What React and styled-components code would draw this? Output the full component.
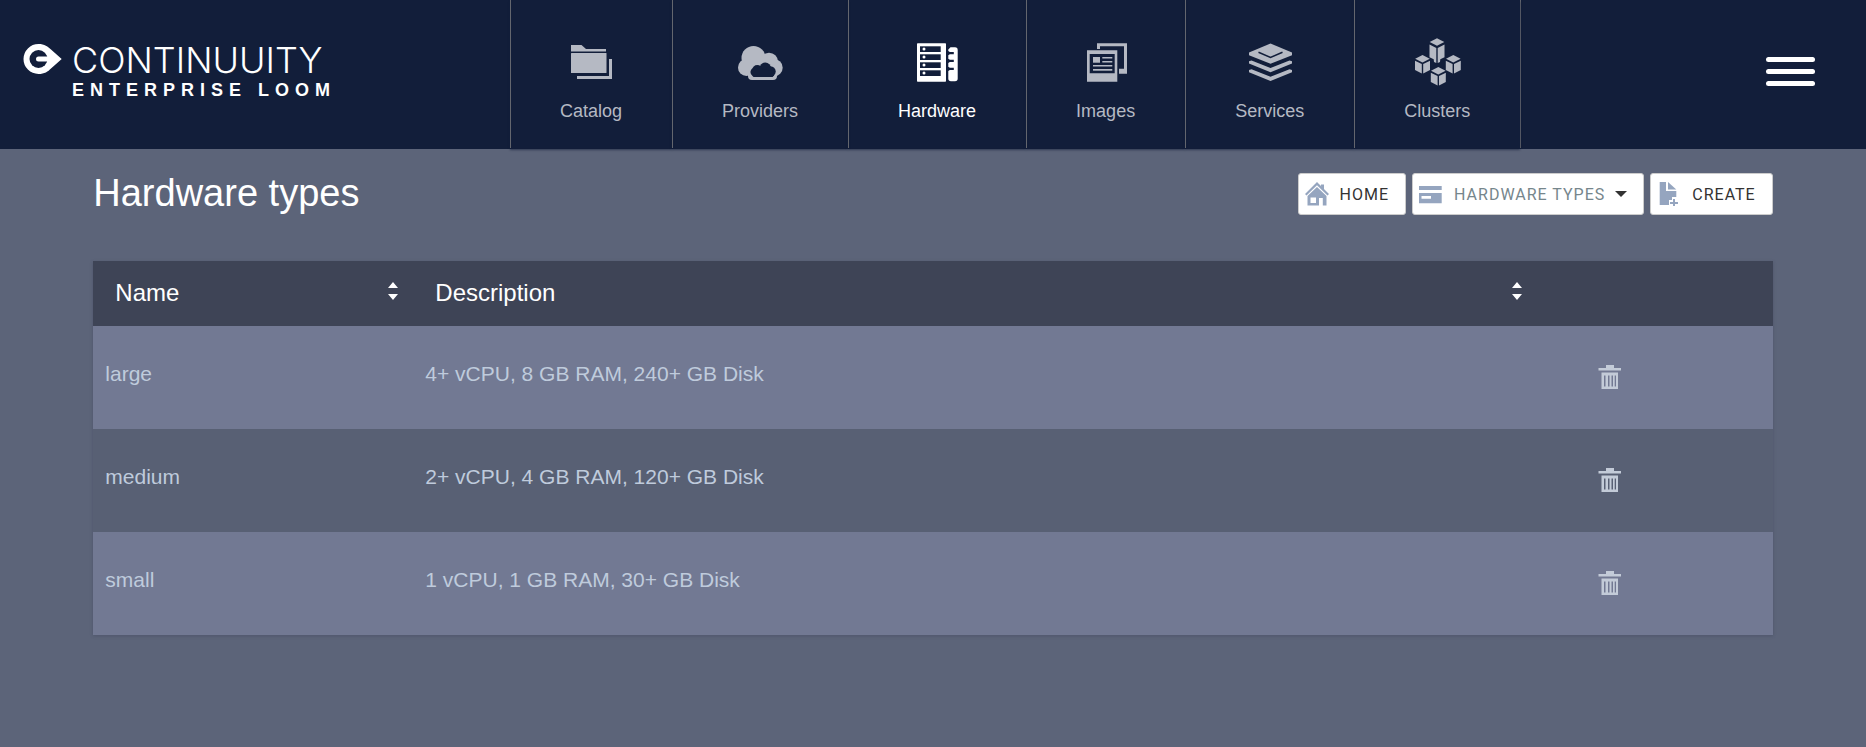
import React from "react";
import styled, { createGlobalStyle } from "styled-components";

const GlobalStyle = createGlobalStyle`
  * { box-sizing: border-box; }
  body {
    margin: 0;
    min-height: 100vh;
    background: #5c6479;
    color: #fff;
    font-family: "Liberation Sans", Arial, sans-serif;
  }
  button { font: inherit; cursor: pointer; }
`;

const Header = styled.header`
  display: grid;
  grid-template-columns: minmax(350px, 510px) auto 1fr;
  align-items: start;
  background: #121e3a;
  padding-bottom: 1px;
`;

const Brand = styled.a`
  display: flex;
  gap: 10px;
  padding: 40px 0 0 22px;
  color: #fff;
  text-decoration: none;
`;

const BrandMark = styled.svg`
  width: 40px;
  height: 32px;
  margin-top: 3px;
`;

const BrandText = styled.span`
  display: flex;
  flex-direction: column;
`;

const BrandName = styled.span`
  font-family: Inter, "DejaVu Sans", sans-serif;
  font-weight: 300;
  font-size: 36px;
  line-height: 40px;
`;

const BrandProduct = styled.span`
  font-size: 18px;
  font-weight: 700;
  line-height: 20px;
  letter-spacing: 6px;
`;

const Nav = styled.nav`
  display: flex;
  border-right: 1px solid #63666e;
`;

const NavItem = styled.a`
  display: flex;
  flex-direction: column;
  align-items: center;
  gap: 13px;
  padding: 38px 50px 25px 49px;
  border-left: 1px solid #63666e;
  box-shadow: 0 2px 2px rgba(18, 30, 58, 0.6);
  color: ${(p) => (p.$active ? "#fff" : "#b5b9c3")};
  font-size: 18px;
  line-height: 24px;
  text-decoration: none;
`;

const NavIcon = styled.svg`
  width: 48px;
  height: 48px;
  fill: currentColor;
`;

const MenuButton = styled.button`
  display: flex;
  flex-direction: column;
  gap: 7px;
  justify-self: end;
  margin: 57px 51px 0 0;
  padding: 0;
  border: 0;
  background: none;
`;

const MenuBar = styled.span`
  width: 49px;
  height: 5px;
  border-radius: 3px;
  background: #fff;
`;

const Main = styled.main`
  padding: 24px 5% 0;
`;

const TitleRow = styled.div`
  display: flex;
  justify-content: space-between;
  align-items: flex-start;
  margin-bottom: 46px;
`;

const Title = styled.h1`
  margin: 0;
  font-size: 38px;
  font-weight: 400;
  line-height: 40px;
`;

const Toolbar = styled.div`
  display: flex;
  gap: 6px;
`;

const ToolButton = styled.button`
  display: flex;
  align-items: center;
  height: 42px;
  padding: 0 16px 0 6px;
  border: 1px solid #ccc;
  border-radius: 3px;
  background: #fff;
  color: ${(p) => (p.$muted ? "#76868c" : "#333")};
  font-family: Roboto, sans-serif;
  font-size: 16px;
  letter-spacing: 1px;
  white-space: nowrap;
`;

const ToolIcon = styled.svg`
  width: 24px;
  height: 24px;
  margin-right: 11px;
  fill: #95a5bf;
`;

const Caret = styled.span`
  margin-left: 10px;
  border: 6px solid transparent;
  border-top-color: #333;
  border-bottom: 0;
`;

const Table = styled.table`
  width: 100%;
  table-layout: fixed;
  border-collapse: collapse;
  box-shadow: 0 1px 3px rgba(60, 66, 90, 0.4);
`;

const Col = styled.col`
  width: ${(p) => p.$width};
`;

const HeadRow = styled.tr`
  height: 65px;
  background: #3e4456;
`;

const HeadCell = styled.th`
  padding: 0 0 2px;
`;

const SortButton = styled.button`
  display: flex;
  align-items: center;
  justify-content: space-between;
  width: 100%;
  padding: 0 15px 0 22px;
  border: 0;
  background: none;
  color: #fff;
  font-size: 24px;
  font-weight: 400;
  line-height: 28px;
`;

const SortIcon = styled.svg`
  width: 10px;
  height: 18px;
  margin-bottom: 4px;
  fill: #fff;
`;

const Row = styled.tr`
  height: 103px;
  background: #586074;
  &:nth-child(odd) { background: #727993; }
`;

const Cell = styled.td`
  padding: 33px 12px 0;
  color: #bfcbdc;
  font-size: 21px;
  line-height: 30px;
  vertical-align: top;
`;

const CellLink = styled.a`
  color: inherit;
  text-decoration: none;
`;

const ActionCell = styled.td`
  padding: 0 0 2px 61px;
`;

const DeleteButton = styled.button`
  display: block;
  padding: 0;
  border: 0;
  background: none;
`;

const TrashSvg = styled.svg`
  display: block;
  width: 24px;
  height: 24px;
  fill: #c3cbd8;
`;

const FolderIcon = () => (
  <NavIcon viewBox="0 0 48 48" aria-hidden="true">
    <path d="M4 7h10.500l4.500 4h20v2.500H4z" />
    <rect x="4" y="15" width="35.500" height="20" rx="0.500" />
    <path d="M42 21h3v20H10v-3h32z" />
  </NavIcon>
);

const CloudIcon = () => (
  <NavIcon viewBox="0 0 48 48" aria-hidden="true">
    <circle cx="17.500" cy="20" r="12" />
    <circle cx="33" cy="23.700" r="9" />
    <circle cx="10.500" cy="29.500" r="8.500" />
    <circle cx="38" cy="29.700" r="8.700" />
    <rect x="12" y="24" width="29" height="18" rx="4" />
    <g fill="#121e3a">
      <circle cx="21.300" cy="32" r="5" />
      <circle cx="29.300" cy="30.400" r="5.800" />
      <circle cx="34.500" cy="33.500" r="5.200" />
      <path d="M18.500 29.500a4.700 4.700 0 0 0-2 8.500l1 1h19l1.500-1.500V33z" />
    </g>
  </NavIcon>
);

const HardwareIcon = () => (
  <NavIcon viewBox="0 0 48 48" aria-hidden="true">
    <rect x="4" y="5.300" width="29" height="38.400" rx="0.700" />
    <g fill="#121e3a">
      {[8.300, 16.300, 24.300, 32.300].map((y) => (
        <rect key={y} x="7" y={y} width="20.700" height="5.700" />
      ))}
    </g>
    {[8.300, 16.300, 24.300, 32.300].map((y) => (
      <circle key={y} cx="11" cy={y + 2.800} r="1.500" />
    ))}
    <path d="M37.500 9.300h4.500a2.700 2.700 0 0 1 2.700 2.700v28.600a2.700 2.700 0 0 1-2.700 2.700h-4a2.700 2.700 0 0 1-2.700-2.700V33l1.500-1h4v-2.300h-4l-1.500-1V25l1.500-1h4v-2.300h-4l-1.500-1V17.300l1.500-1h4V14h-4l-1.500-1v-1.500z" />
  </NavIcon>
);

const ImagesIcon = () => (
  <NavIcon viewBox="0 0 48 48" aria-hidden="true">
    <path d="M15 5.300h30v30.400h-8v-5h5V8.300H18V11h-3z" />
    <path fillRule="evenodd" d="M5 12.200h30.300v31.500H5zM7.700 16v19.300h25V16z" />
    <rect x="11" y="19" width="7" height="5.700" />
    <rect x="20.300" y="19" width="10" height="1.500" />
    <rect x="20.300" y="23" width="10" height="1.500" />
    <rect x="11" y="27" width="19.300" height="1.500" />
    <rect x="11" y="31" width="19.300" height="1.700" />
  </NavIcon>
);

const ServicesIcon = () => (
  <NavIcon viewBox="0 0 48 48" aria-hidden="true">
    <path d="M24.500 5.500 46 14.500v2.700l-21.500 8.600L3 17.200v-2.700z" />
    <path d="m12.500 14.300 12 5.200 12-5.200" fill="none" stroke="#121e3a" strokeWidth="1.500" />
    <path d="m3 23.200 2.500-.7 19 7.500 19-7.500 2.500.7v2.300l-21.500 8.800L3 25.500z" />
    <path d="m3 32 2.500-.7 19 7.500 19-7.500 2.500.7v2.300l-21.500 8.800L3 34.300z" />
  </NavIcon>
);

const Cube = ({ x, y }) => (
  <g transform={`translate(${x} ${y})`}>
    <path d="M0 0 7.300 3.700 0 7.500-7.300 3.700z" />
    <path d="m-7.500 5.700 6.800 3.400v9.300l-6.800-3.400z" />
    <path d="m7.500 5.700-6.800 3.400v9.300l6.800-3.400z" />
  </g>
);

const ClustersIcon = () => (
  <NavIcon viewBox="0 0 48 48" aria-hidden="true">
    <path d="m24 .3 7.300 3.700L24 7.800 16.700 4z" />
    <path d="m16.500 6.500 6.800 3.400V25L21 24l-.3-2.700-4.200-2z" />
    <path d="m31.500 6.500-6.800 3.400V25l2.300-1 .3-2.700 4.200-2z" />
    <Cube x={9.500} y={17} />
    <Cube x={40.300} y={17} />
    <Cube x={25.300} y={29} />
  </NavIcon>
);

const HomeIcon = () => (
  <ToolIcon viewBox="0 0 24 24" aria-hidden="true">
    <path d="M12 0 24 12l-1.500 1.500L12 3.300 1.500 13.500 0 12zM16 2.500h3v4.500l-3-3z" />
    <path fillRule="evenodd" d="M12 5l9.500 9v9.500h-3.700V16H14v7.500H2.500V14zM5.500 15.500V21H11v-5.500z" />
  </ToolIcon>
);

const CardIcon = () => (
  <ToolIcon viewBox="0 0 24 24" aria-hidden="true">
    <rect y="4" width="22.700" height="4" />
    <path fillRule="evenodd" d="M0 11h22.700v10.300H0zM2.500 14v2.700H12V14z" />
  </ToolIcon>
);

const NewFileIcon = () => (
  <ToolIcon viewBox="0 0 24 24" aria-hidden="true">
    <path d="M2.700 0H9v9h10.300v6H15v3h-3v5H2.700z" />
    <path d="M11 0l8.300 7.500H11z" />
    <path d="M16 17h2v3h3v2h-3v3h-2v-3h-3v-2h3z" />
  </ToolIcon>
);

const TrashIcon = () => (
  <TrashSvg viewBox="0 0 24 24" aria-hidden="true">
    <path d="M8 0h8v3h7v2.500H0.500V3H8z" />
    <path fillRule="evenodd" d="M3.500 7.500h16.500V24H3.500zM6 10.500v11h1.500v-11zM10 10.500v11h1.500v-11zM13.500 10.500v11H15v-11zM16.700 10.500v11h1.300v-11z" />
  </TrashSvg>
);

const navItems = [
  { label: "Catalog", Icon: FolderIcon },
  { label: "Providers", Icon: CloudIcon },
  { label: "Hardware", Icon: HardwareIcon, active: true },
  { label: "Images", Icon: ImagesIcon },
  { label: "Services", Icon: ServicesIcon },
  { label: "Clusters", Icon: ClustersIcon },
];

const hardwareTypes = [
  { name: "large", description: "4+ vCPU, 8 GB RAM, 240+ GB Disk" },
  { name: "medium", description: "2+ vCPU, 4 GB RAM, 120+ GB Disk" },
  { name: "small", description: "1 vCPU, 1 GB RAM, 30+ GB Disk" },
];

const SortableHead = ({ children }) => (
  <HeadCell scope="col">
    <SortButton type="button">
      {children}
      <SortIcon viewBox="0 0 10 18" aria-hidden="true">
        <path d="M5 0l5 6H0zM0 12h10l-5 6z" />
      </SortIcon>
    </SortButton>
  </HeadCell>
);

export default function App() {
  return (
    <>
      <GlobalStyle />
      <Header>
        <Brand href="#home">
          <BrandMark viewBox="0 0 40 32" aria-hidden="true">
            <path fill="#fff" d="M16.500 1c6 0 9.500 2.500 12.500 5.500L39.700 16 29 25.500c-3 3-6.500 5.500-12.500 5.500a15 15 0 0 1 0-30z" />
            <circle cx="16.500" cy="16" r="9" fill="#121e3a" />
            <path fill="#fff" d="M16.500 13.500H30v5H16.500a2.500 2.500 0 0 1 0-5z" />
          </BrandMark>
          <BrandText>
            <BrandName>CONTINUUITY</BrandName>
            <BrandProduct>ENTERPRISE LOOM</BrandProduct>
          </BrandText>
        </Brand>
        <Nav>
          {navItems.map(({ label, Icon, active }) => (
            <NavItem key={label} href={`#${label.toLowerCase()}`} $active={active}>
              <Icon />
              {label}
            </NavItem>
          ))}
        </Nav>
        <MenuButton type="button" aria-label="Menu">
          <MenuBar />
          <MenuBar />
          <MenuBar />
        </MenuButton>
      </Header>
      <Main>
        <TitleRow>
          <Title>Hardware types</Title>
          <Toolbar>
            <ToolButton type="button">
              <HomeIcon />
              HOME
            </ToolButton>
            <ToolButton type="button" $muted aria-haspopup="menu">
              <CardIcon />
              HARDWARE TYPES
              <Caret />
            </ToolButton>
            <ToolButton type="button">
              <NewFileIcon />
              CREATE
            </ToolButton>
          </Toolbar>
        </TitleRow>
        <Table>
          <colgroup>
            <Col $width="320px" />
            <Col $width="auto" />
            <Col $width="236px" />
          </colgroup>
          <thead>
            <HeadRow>
              <SortableHead>Name</SortableHead>
              <SortableHead>Description</SortableHead>
              <HeadCell aria-label="Actions" />
            </HeadRow>
          </thead>
          <tbody>
            {hardwareTypes.map(({ name, description }) => (
              <Row key={name}>
                <Cell>
                  <CellLink href={`#${name}`}>{name}</CellLink>
                </Cell>
                <Cell>{description}</Cell>
                <ActionCell>
                  <DeleteButton type="button" aria-label={`Delete ${name}`}>
                    <TrashIcon />
                  </DeleteButton>
                </ActionCell>
              </Row>
            ))}
          </tbody>
        </Table>
      </Main>
    </>
  );
}
